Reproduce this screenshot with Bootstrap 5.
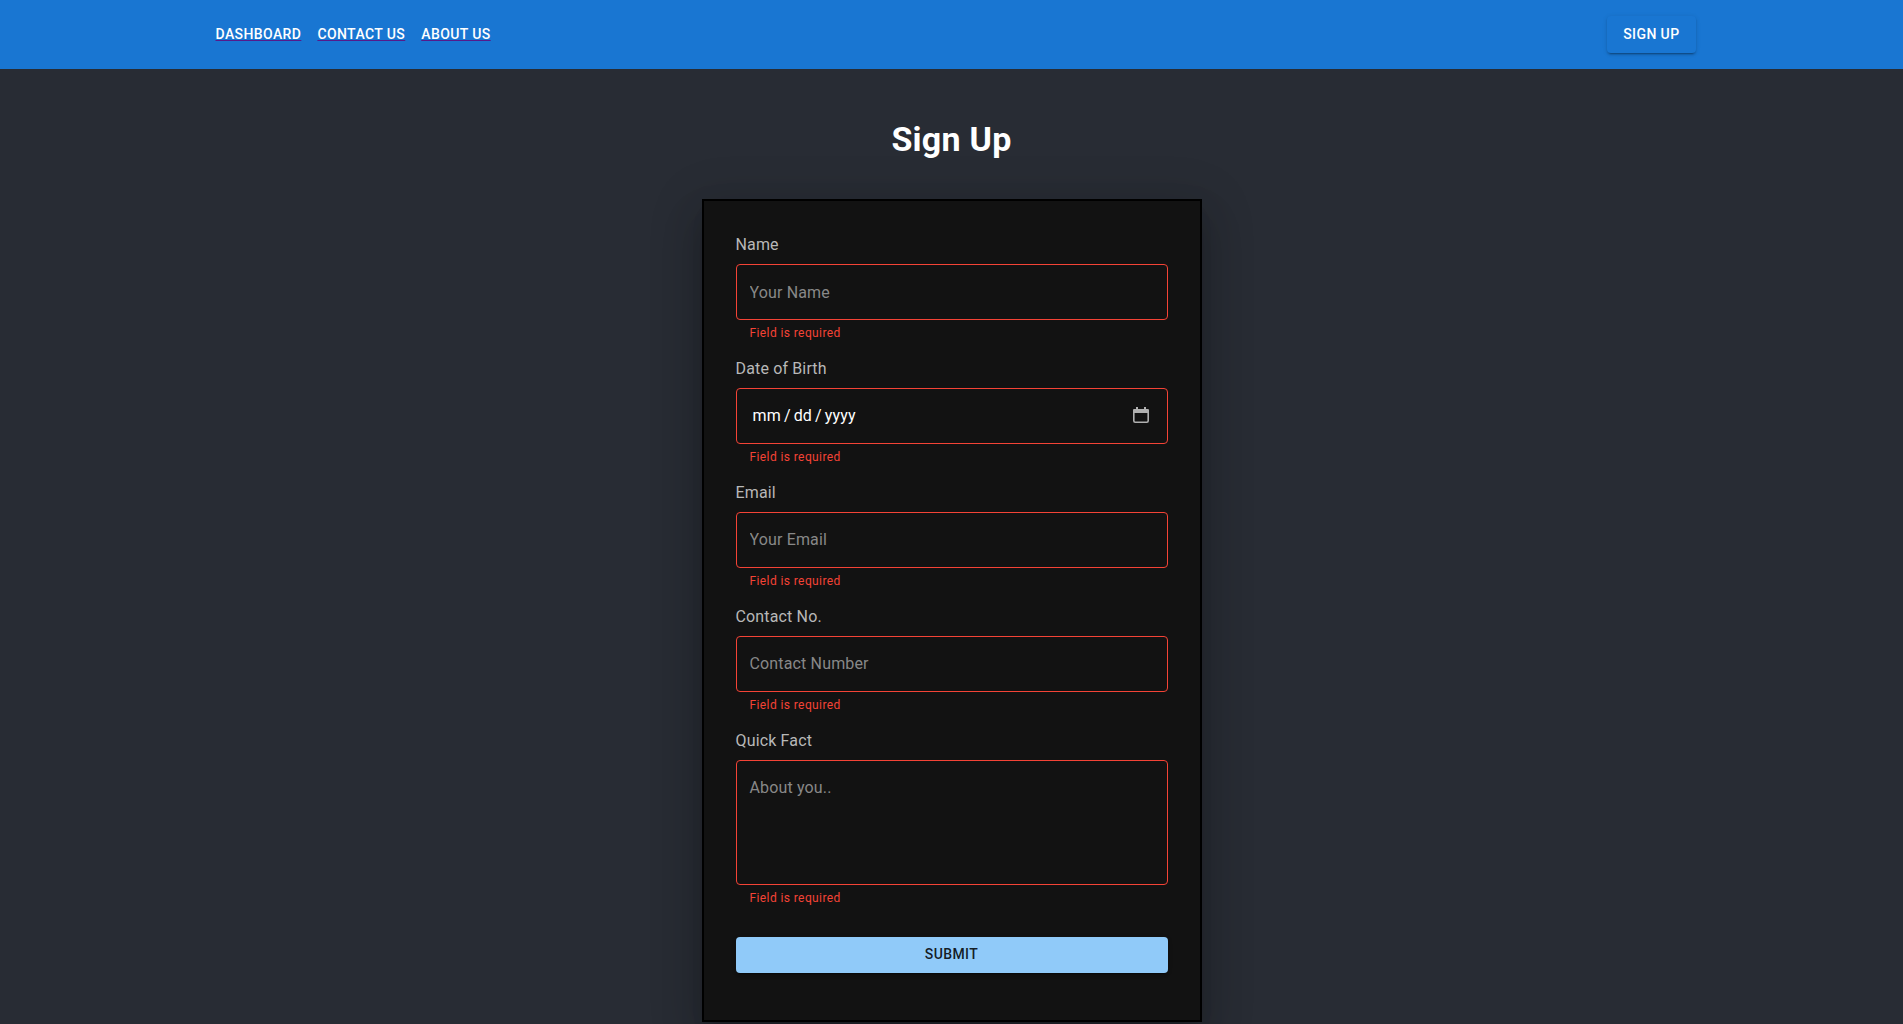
<!DOCTYPE html>
<html lang="en">
<head>
<meta charset="utf-8">
<meta name="viewport" content="width=device-width, initial-scale=1">
<title>Sign Up</title>
<link href="https://cdn.jsdelivr.net/npm/bootstrap@5.3.0/dist/css/bootstrap.min.css" rel="stylesheet">
<style>
body{background:#282c34;color:#fff;font-family:Roboto,"Liberation Sans",sans-serif;font-size:16px;line-height:24px;height:1024px;overflow:hidden}
.topbar{background:#1976d2;height:69px;padding:0 207.5px 0 215.5px}
.topbar a{font-size:14px;font-weight:500;line-height:24.5px;letter-spacing:.02857em;text-transform:uppercase;color:#551a8b}
.topbar a span{color:#fff}
.topbar .btn-signup{background:#1976d2;color:#fff;padding:6px 16px;border-radius:4px;text-decoration:none;box-shadow:0 3px 1px -2px rgba(0,0,0,.2),0 2px 2px rgba(0,0,0,.14),0 1px 5px rgba(0,0,0,.12)}
.page-title{font-size:34px;font-weight:700;line-height:42px;letter-spacing:.00735em;margin:49px 0 39px}
.form-panel{width:500px;height:823px;background:#121212;border:2px solid #000;padding:32px 32px;box-shadow:0 11px 15px -7px rgba(0,0,0,.2),0 24px 38px 3px rgba(0,0,0,.14),0 9px 46px 8px rgba(0,0,0,.12)}
.form-panel label{display:block;color:#b8b8b8;line-height:24px;letter-spacing:.00938em;margin-bottom:7px}
.form-panel .form-control{height:56px;background:#121212;border:1px solid #f44336;border-radius:4px;padding:14.5px 13px 16.5px;color:#fff;line-height:23px;letter-spacing:.00938em;resize:none;box-shadow:none}
.form-panel #name{padding:15.5px 13px}
.form-panel textarea.form-control{height:125px}
.form-panel .form-control::placeholder{color:#888;opacity:1}
.date-text{margin-left:3px;word-spacing:-1.1px}
.date-box svg{width:16px;height:16px;margin-right:4.5px}
.helper{font-size:12px;line-height:20px;letter-spacing:.03333em;color:#f44336;margin:3px 14px 14px}
.btn-submit{height:36px;background:#90caf9;color:rgba(0,0,0,.87);font-size:14px;font-weight:500;letter-spacing:.02857em;line-height:24px;padding:5px 16px 7px;border:0;border-radius:4px;margin-top:15px;box-shadow:0 3px 1px -2px rgba(0,0,0,.2),0 2px 2px rgba(0,0,0,.14),0 1px 5px rgba(0,0,0,.12)}
</style>
</head>
<body>
<nav class="topbar d-flex align-items-center justify-content-between">
  <div class="d-flex gap-3">
    <a href="#"><span>Dashboard</span></a>
    <a href="#"><span>Contact us</span></a>
    <a href="#"><span>About us</span></a>
  </div>
  <a class="btn-signup" href="#">Sign Up</a>
</nav>
<main class="d-flex flex-column align-items-center">
  <h1 class="page-title">Sign Up</h1>
  <form class="form-panel flex-shrink-0">
    <label for="name">Name</label>
    <input id="name" class="form-control" type="text" placeholder="Your Name">
    <div class="helper">Field is required</div>
    <label>Date of Birth</label>
    <div class="form-control date-box d-flex align-items-center justify-content-between">
      <span class="date-text">mm / dd / yyyy</span>
      <svg viewBox="0 0 16 16" fill="none"><path d="M4 0v3M12 0v3" stroke="#b0b0b0" stroke-width="2"/><rect x=".8" y="2.8" width="14.4" height="12.4" rx="1.4" stroke="#b0b0b0" stroke-width="1.6"/><path d="M0 3.4A1.4 1.4 0 0 1 1.4 2H14.6A1.4 1.4 0 0 1 16 3.4V6H0z" fill="#b0b0b0"/></svg>
    </div>
    <div class="helper">Field is required</div>
    <label for="email">Email</label>
    <input id="email" class="form-control" type="email" placeholder="Your Email">
    <div class="helper">Field is required</div>
    <label for="contact">Contact No.</label>
    <input id="contact" class="form-control" type="text" placeholder="Contact Number">
    <div class="helper">Field is required</div>
    <label for="fact">Quick Fact</label>
    <textarea id="fact" class="form-control" placeholder="About you.."></textarea>
    <div class="helper">Field is required</div>
    <button type="button" class="btn btn-submit w-100">SUBMIT</button>
  </form>
</main>
<script src="https://cdn.jsdelivr.net/npm/bootstrap@5.3.0/dist/js/bootstrap.bundle.min.js"></script>
</body>
</html>
